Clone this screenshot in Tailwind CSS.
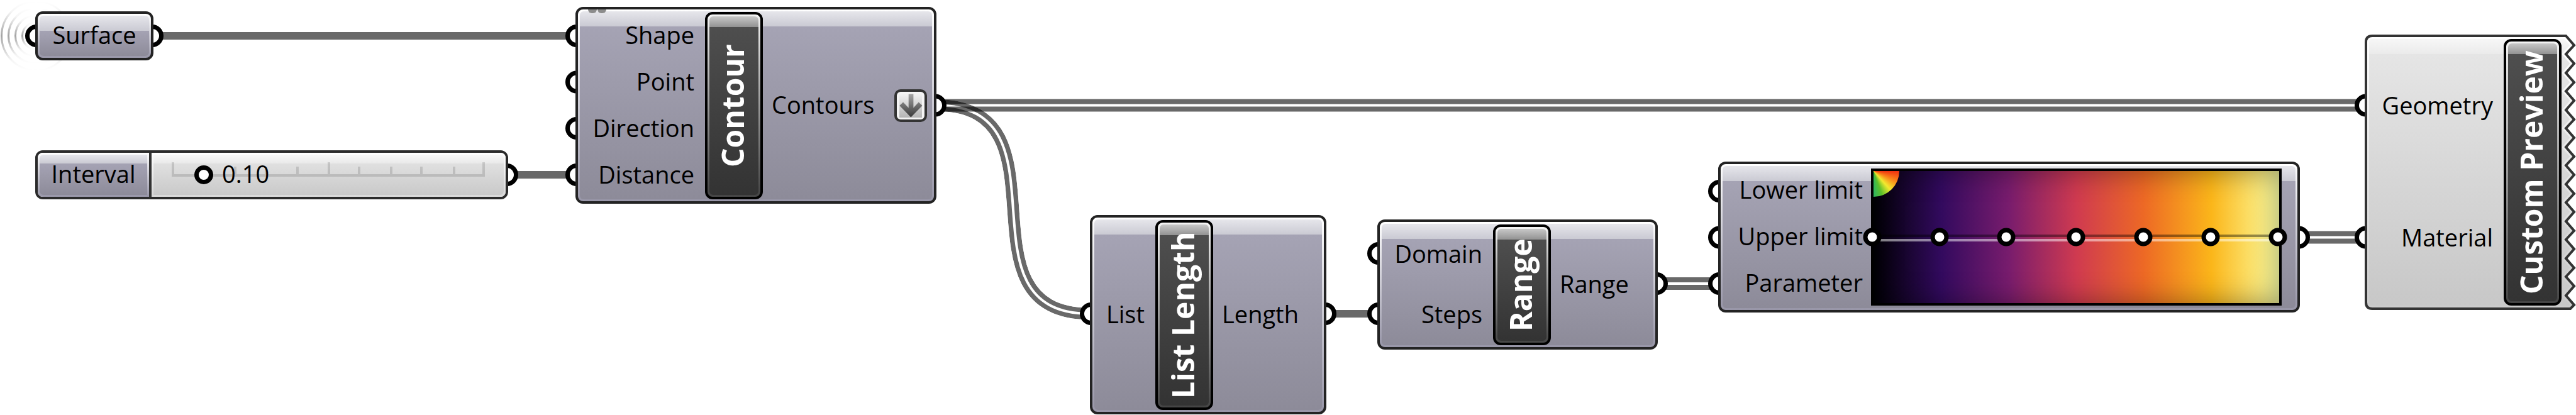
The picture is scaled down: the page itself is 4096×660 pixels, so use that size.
<!DOCTYPE html>
<html lang="en">
<head>
<meta charset="utf-8">
<title>Contour definition</title>
<script src="https://cdn.jsdelivr.net/npm/@tailwindcss/browser@4"></script>
</head>
<body class="bg-white">
<main class="relative min-h-screen w-full overflow-hidden bg-white font-['Open_Sans','Noto_Sans',sans-serif] text-[38px] leading-none text-black">

  <!-- wires and grips, beneath the nodes -->
  <svg class="absolute left-0 top-0" width="4096" height="660" viewBox="0 0 4096 660" fill="none" aria-hidden="true">
    <defs>
      <linearGradient id="fade" x1="0" y1="0" x2="0" y2="1">
        <stop offset="0" stop-color="#000" stop-opacity="0"/>
        <stop offset=".15" stop-color="#000" stop-opacity=".04"/>
        <stop offset=".5" stop-color="#000" stop-opacity=".36"/>
        <stop offset=".85" stop-color="#000" stop-opacity=".04"/>
        <stop offset="1" stop-color="#000" stop-opacity="0"/>
      </linearGradient>
      <mask id="gap" maskUnits="userSpaceOnUse" x="1480" y="140" width="270" height="380">
        <path d="M1489 167.5C1710 167.5 1512 499 1733 499" stroke="#fff" stroke-width="19"/>
        <path d="M1489 167.5C1710 167.5 1512 499 1733 499" stroke="#000" stroke-width="4"/>
      </mask>
    </defs>
    <g stroke="url(#fade)" stroke-width="3">
      <circle cx="57.500" cy="57" r="55"/><circle cx="57.500" cy="57" r="44"/><circle cx="57.500" cy="57" r="33"/><circle cx="57.500" cy="57" r="22"/>
    </g>
    <g stroke="#000" stroke-opacity=".59">
      <path stroke-width="12" d="M250 57H910M815 278H910M2115 499H2185"/>
      <path stroke-width="8" d="M1495 161.500H3755M1495 173.500H3755M2642 445H2727M2642 457H2727M3663 371.500H3755M3663 383.500H3755"/>
      <path stroke-width="19" mask="url(#gap)" d="M1489 167.500C1710 167.500 1512 499 1733 499"/>
    </g>
    <g stroke="#000" stroke-width="7" fill="#fff">
      <circle cx="58" cy="57" r="14.500"/><circle cx="242" cy="57" r="14.500"/>
      <circle cx="806" cy="278" r="14.500"/>
      <circle cx="917" cy="57" r="14.500"/><circle cx="917" cy="130.500" r="14.500"/><circle cx="917" cy="204" r="14.500"/><circle cx="917" cy="278" r="14.500"/>
      <circle cx="1487" cy="167.500" r="14.500"/>
      <circle cx="1735" cy="499" r="14.500"/><circle cx="2107" cy="499" r="14.500"/>
      <circle cx="2192" cy="403" r="14.500"/><circle cx="2192" cy="499" r="14.500"/><circle cx="2634" cy="451" r="14.500"/>
      <circle cx="2734" cy="304" r="14.500"/><circle cx="2734" cy="377.500" r="14.500"/><circle cx="2734" cy="451" r="14.500"/><circle cx="3655" cy="377.500" r="14.500"/>
      <circle cx="3762" cy="167.500" r="14.500"/><circle cx="3762" cy="377.500" r="14.500"/>
    </g>
  </svg>

  <!-- Surface -->
  <section class="absolute left-[56px] top-[18px] flex h-[78px] w-[188px] rounded-xl border-4 border-[#232323] bg-linear-to-b from-white to-[#9896a8] p-[3px]">
    <div class="flex flex-1 items-center justify-center rounded-md bg-[linear-gradient(#e6e6eb,#cacad3_24px,#a5a3b4_24px,#8d8b99)] pb-1">Surface</div>
  </section>

  <!-- Interval slider -->
  <section class="absolute left-[56px] top-[239px] flex h-[78px] w-[752px] rounded-xl border-4 border-[#2b2b2b]">
    <div class="flex w-[177px] rounded-l-lg bg-linear-to-b from-white to-[#9896a8] p-[3px]">
      <label for="interval" class="flex flex-1 items-center justify-center rounded-l-md bg-[linear-gradient(#e6e6eb,#cacad3_14px,#a5a3b4_14px,#8d8b99)] pb-1">Interval</label>
    </div>
    <div class="relative flex flex-1 rounded-r-lg border-l-4 border-[#333] bg-linear-to-b from-white to-[#d8d8d8] p-[3px]">
      <div class="flex-1 rounded-r-md bg-[linear-gradient(#f8f8f8,#e9e9e9_14px,#e0e0e0_14px,#c9c9c9)]"></div>
      <svg class="absolute left-[32px] top-[14px]" width="502" height="24" viewBox="0 0 502 24" fill="none" stroke="#000" stroke-opacity=".13" stroke-width="4" aria-hidden="true">
        <path d="M2 1V20M250 1V20M496 1V20M101 8V20M150 8V20M200 8V20M298 8V20M349 8V20M397 8V20M449 8V20M0 22H498"/>
      </svg>
      <input id="interval" type="range" min="0" max="1" step="0.01" value="0.1" class="absolute left-[19px] top-[20px] h-[30px] w-[523px] appearance-none bg-transparent [&::-webkit-slider-thumb]:size-[30px] [&::-webkit-slider-thumb]:appearance-none [&::-webkit-slider-thumb]:rounded-full [&::-webkit-slider-thumb]:border-[7px] [&::-webkit-slider-thumb]:border-black [&::-webkit-slider-thumb]:bg-white">
      <output for="interval" class="absolute left-[112px] top-[14px]">0.10</output>
    </div>
  </section>

  <!-- Contour -->
  <section class="absolute left-[915px] top-[11px] flex h-[313px] w-[574px] rounded-xl border-4 border-[#232323] bg-linear-to-b from-white to-[#9896a8] p-[3px]">
    <div class="flex flex-1 items-center rounded-md bg-[linear-gradient(#e6e6eb,#cacad3_24px,#a5a3b4_24px,#8d8b99)]">
      <ul class="w-[182px] text-right">
        <li class="flex h-[74px] items-center justify-end pb-1">Shape</li>
        <li class="flex h-[74px] items-center justify-end pb-1">Point</li>
        <li class="flex h-[74px] items-center justify-end pb-1">Direction</li>
        <li class="flex h-[74px] items-center justify-end pb-1">Distance</li>
      </ul>
      <div class="ml-[17px] flex h-[298px] w-[92px] rounded-xl border-4 border-black bg-[linear-gradient(#f4f4f4,#bbb_30%,#444)] p-[3px]">
        <h2 class="flex flex-1 rotate-180 items-center justify-center rounded-md bg-[linear-gradient(to_top,#c8c8c8,#929292_17px,#4e4e4e_17px,#333)] pl-1 text-[48px] font-bold text-white [writing-mode:vertical-rl]">Contour</h2>
      </div>
      <div class="ml-[14px] flex flex-1 items-center justify-between pr-[8px]"><span class="pb-1">Contours</span>
        <button type="button" aria-label="Flatten" class="size-[52px]">
          <svg viewBox="0 0 52 52" class="size-full">
            <defs>
              <linearGradient id="btn" x1="0" y1="0" x2="0" y2="1"><stop stop-color="#f2f2f2"/><stop offset="1" stop-color="#b4b4b4"/></linearGradient>
              <linearGradient id="arr" x1="0" y1="0" x2="0" y2="1"><stop stop-color="#a6a6a6"/><stop offset="1" stop-color="#383838"/></linearGradient>
            </defs>
            <rect x="2" y="2" width="48" height="48" rx="8" fill="#f4f4f4" stroke="#333" stroke-width="4"/>
            <rect x="8" y="7" width="36" height="38" fill="url(#btn)"/>
            <path d="M22.700 7.400H30.400V29.500L38.700 20.600L44.500 26L26.400 44.500L8.300 26L14 20.600L22.700 29.500Z" fill="url(#arr)"/>
          </svg>
        </button>
      </div>
    </div>
    <div class="absolute left-[16px] top-0 flex gap-px"><i class="h-[6px] w-[14px] rounded-b-full bg-[#8c8c8c]"></i><i class="h-[6px] w-[14px] rounded-b-full bg-[#8c8c8c]"></i></div>
  </section>

  <!-- List Length -->
  <section class="absolute left-[1733px] top-[342px] flex h-[317px] w-[376px] rounded-xl border-4 border-[#232323] bg-linear-to-b from-white to-[#9896a8] p-[3px]">
    <div class="flex flex-1 items-center rounded-md bg-[linear-gradient(#e6e6eb,#cacad3_24px,#a5a3b4_24px,#8d8b99)]">
      <div class="w-[80px] pb-1 text-right">List</div>
      <div class="ml-[17px] flex h-[302px] w-[92px] rounded-xl border-4 border-black bg-[linear-gradient(#f4f4f4,#bbb_30%,#444)] p-[3px]">
        <h2 class="flex flex-1 rotate-180 items-center justify-center rounded-md bg-[linear-gradient(to_top,#c8c8c8,#929292_17px,#4e4e4e_17px,#333)] pl-1 text-[48px] font-bold text-white [writing-mode:vertical-rl]">List Length</h2>
      </div>
      <div class="ml-[14px] pb-1">Length</div>
    </div>
  </section>

  <!-- Range -->
  <section class="absolute left-[2190px] top-[349px] flex h-[207px] w-[446px] rounded-xl border-4 border-[#232323] bg-linear-to-b from-white to-[#9896a8] p-[3px]">
    <div class="flex flex-1 items-center rounded-md bg-[linear-gradient(#e6e6eb,#cacad3_24px,#a5a3b4_24px,#8d8b99)]">
      <ul class="w-[160px]">
        <li class="flex h-[96px] items-center justify-end pb-1">Domain</li>
        <li class="flex h-[96px] items-center justify-end pb-1">Steps</li>
      </ul>
      <div class="ml-[17px] flex h-[192px] w-[92px] rounded-xl border-4 border-black bg-[linear-gradient(#f4f4f4,#bbb_30%,#444)] p-[3px]">
        <h2 class="flex flex-1 rotate-180 items-center justify-center rounded-md bg-[linear-gradient(to_top,#c8c8c8,#929292_17px,#4e4e4e_17px,#333)] pl-1 text-[48px] font-bold text-white [writing-mode:vertical-rl]">Range</h2>
      </div>
      <div class="ml-[14px] pb-1">Range</div>
    </div>
  </section>

  <!-- Gradient -->
  <section class="absolute left-[2732px] top-[257px] flex h-[240px] w-[925px] rounded-xl border-4 border-[#232323] bg-linear-to-b from-white to-[#9896a8] p-[3px]">
    <div class="flex flex-1 items-center rounded-md bg-[linear-gradient(#e6e6eb,#cacad3_24px,#a5a3b4_24px,#8d8b99)]">
      <ul class="w-[223px]">
        <li class="flex h-[74px] items-center justify-end pb-1">Lower limit</li>
        <li class="flex h-[74px] items-center justify-end pb-1">Upper limit</li>
        <li class="flex h-[74px] items-center justify-end pb-1">Parameter</li>
      </ul>
      <div class="relative ml-[13px] h-[218px] w-[653px] border-4 border-black bg-[linear-gradient(90deg,#000004,#320a5e_16.670%,#781c6d_33.330%,#cf3a50_50%,#ed6925_66.670%,#fbb61a_83.330%,#fcffa4)] shadow-[inset_0_0_46px_rgba(0,0,0,0.400)]">
        <div class="absolute left-0 top-0 size-[41px] rounded-br-full bg-[conic-gradient(from_90deg_at_0_0,#f03010_0deg,#f98a1a_25deg,#f2e92f_48deg,#5cc02a_70deg,#2eb560_90deg)]"></div>
        <svg class="absolute -left-[20px] top-[85px]" width="685" height="40" viewBox="0 0 685 40" aria-hidden="true">
          <path d="M18 18H664" stroke="#000" stroke-opacity=".4" stroke-width="4"/>
          <path d="M18 25H664" stroke="#fff" stroke-opacity=".5" stroke-width="4"/>
          <g fill="#fff" stroke="#000" stroke-width="7">
            <circle cx="18" cy="20" r="11"/><circle cx="125" cy="20" r="11"/><circle cx="231" cy="20" r="11"/><circle cx="342" cy="20" r="11"/><circle cx="449" cy="20" r="11"/><circle cx="556" cy="20" r="11"/><circle cx="663" cy="20" r="11"/>
          </g>
        </svg>
      </div>
    </div>
  </section>

  <!-- Custom Preview -->
  <section class="absolute left-[3760px] top-[55px] flex h-[438px] w-[336px] items-center">
    <svg class="absolute left-0 top-0" width="336" height="438" viewBox="0 0 336 438" aria-hidden="true">
      <defs>
        <linearGradient id="body" x1="0" y1="0" x2="0" y2="438" gradientUnits="userSpaceOnUse">
          <stop stop-color="#fafafa"/><stop offset=".071" stop-color="#ebebeb"/><stop offset=".071" stop-color="#e5e5e5"/><stop offset="1" stop-color="#c7c7c7"/>
        </linearGradient>
        <linearGradient id="bevel" x1="0" y1="0" x2="0" y2="438" gradientUnits="userSpaceOnUse">
          <stop stop-color="#fff"/><stop offset="1" stop-color="#cbcbcb"/>
        </linearGradient>
        <path id="shape" d="M12 2H320L333 17L320 31L333 46L320 61L333 76L320 90L333 105L320 120L333 135L320 149L333 164L320 179L333 194L320 208L333 223L320 238L333 253L320 267L333 282L320 297L333 312L320 326L333 341L320 356L333 371L320 385L333 400L320 415L333 430L327 436H12Q2 436 2 426V12Q2 2 12 2Z"/>
        <clipPath id="clip"><use href="#shape"/></clipPath>
      </defs>
      <use href="#shape" fill="url(#body)"/>
      <use href="#shape" fill="none" stroke="url(#bevel)" stroke-width="10" clip-path="url(#clip)"/>
      <use href="#shape" fill="none" stroke="#333" stroke-width="4"/>
    </svg>
    <ul class="relative w-[204px]">
      <li class="flex h-[210px] items-center justify-end pb-1">Geometry</li>
      <li class="flex h-[210px] items-center justify-end pb-1">Material</li>
    </ul>
    <div class="relative ml-[17px] flex h-[424px] w-[92px] rounded-xl border-4 border-black bg-[linear-gradient(#f4f4f4,#bbb_30%,#444)] p-[3px]">
      <h2 class="flex flex-1 rotate-180 items-center justify-center rounded-md bg-[linear-gradient(to_top,#c8c8c8,#929292_17px,#4e4e4e_17px,#333)] pl-1 text-[48px] font-bold text-white [writing-mode:vertical-rl]">Custom Preview</h2>
    </div>
  </section>
</main>
</body>
</html>
